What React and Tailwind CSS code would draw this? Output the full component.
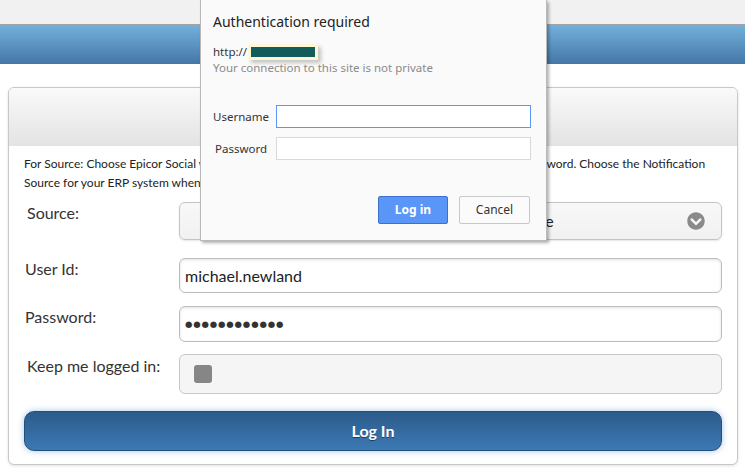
import { FaChevronCircleDown } from 'react-icons/fa'

const rows = [
  { label: 'User Id:', value: 'michael.newland' },
  { label: 'Password:', value: '●●●●●●●●●●●●', dots: true },
]

export default function App() {
  return (
    <div className="relative w-[745px] h-[471px] overflow-hidden bg-white font-['Lato',sans-serif]">
      {/* top chrome */}
      <div className="h-[25px] bg-[#f1f1f1] border-b border-[#a3a3a3]" />
      <div className="h-[39px] bg-linear-to-b from-[#73b1dc] to-[#4576a7]" />

      {/* login card */}
      <div className="mx-[8px] mt-[23px] w-[730px] rounded-[6px] border border-[#c8c8c8] bg-white shadow-[0_1px_3px_rgba(0,0,0,0.12)] overflow-hidden">
        <div className="h-[58px] bg-linear-to-b from-[#fafafa] to-[#e3e3e3]" />
        <div className="px-[15px] pt-[8px] pb-[13px]">
          <p className="text-[12px] leading-[19px] text-[#222] whitespace-nowrap">
            For Source: Choose Epicor Social when logging in with your Epicor Social profile user name and password. Choose the Notification
            <br />
            Source for your ERP system when logging in with your ERP user name and password.
          </p>

          <div className="mt-[10px] flex items-start">
            <div className="w-[155px] pl-[3px] pt-[1px] text-[16px] leading-[19px] text-[#333]">Source:</div>
            <div className="flex-1 h-[38px] rounded-[6px] border border-[#c4c4c4] bg-linear-to-b from-[#f8f8f8] to-[#f1f1f1] shadow-[0_1px_2px_rgba(0,0,0,0.1)] flex items-center pl-[2px] pr-[16px]">
              <span className="flex-1 text-center text-[16px] text-[#222]">Epicor ERP 10 Notification Source</span>
              <FaChevronCircleDown className="w-[18px] h-[18px] text-[#8a8a8a]" />
            </div>
          </div>

          {rows.map((r, i) => (
            <div key={i} className={`${i === 0 ? 'mt-[18px]' : 'mt-[13px]'} flex items-start`}>
              <div className="w-[155px] pl-[1px] pt-[1px] text-[16px] leading-[19px] text-[#333]">{r.label}</div>
              <div className={`flex-1 ${i === 0 ? 'h-[35px]' : 'h-[36px]'} rounded-[6px] border border-[#bdbdbd] bg-white shadow-[inset_0_1px_3px_rgba(0,0,0,0.12)] flex items-center px-[5px]`}>
                {r.dots ? (
                  <span className="text-[8.5px] tracking-[0.85px] text-[#333] font-['DejaVu_Sans',sans-serif]">{r.value}</span>
                ) : (
                  <span className="text-[16px] text-[#222]">{r.value}</span>
                )}
              </div>
            </div>
          ))}

          <div className="mt-[12px] flex items-start">
            <div className="w-[155px] pl-[3px] pt-[2px] text-[16px] leading-[19px] text-[#333]">Keep me logged in:</div>
            <div className="flex-1 h-[40px] rounded-[6px] border border-[#c6c6c6] bg-[#f5f5f5] flex items-center pl-[14px]">
              <span className="w-[18px] h-[18px] rounded-[3px] bg-[#868686]" />
            </div>
          </div>

          <button className="mt-[17px] w-full h-[40px] rounded-[10px] border border-[#244f7c] bg-linear-to-b from-[#2c5b8b] to-[#3c79b4] shadow-[0_0_6px_rgba(90,150,215,0.55)] text-white text-[16px] font-bold [text-shadow:0_1px_0_#1d3f63]">
            Log In
          </button>
        </div>
      </div>

      {/* browser auth dialog */}
      <div className="absolute left-[200px] top-0 w-[347px] h-[241px] bg-[#fafafa] border-x border-b border-[#b9b9b9] shadow-[2px_2px_3px_rgba(0,0,0,0.3)] pl-[12px] pr-[15px] font-['Noto_Sans',sans-serif]">
        <div className="pt-[12px] text-[14px] leading-[20px] text-[#222]">Authentication required</div>
        <div className="mt-[12px] text-[11.5px] leading-[16px] text-[#333] flex items-center">
          http://
          <span className="ml-[4px] inline-block w-[64px] h-[10px] bg-[#135c5c] shadow-[0_0_0_3px_#fdf7d8,3px_3px_4px_3px_rgba(0,0,0,0.22)]" />
        </div>
        <div className="text-[11.5px] leading-[16px] text-[#8a8a8a]">Your connection to this site is not private</div>

        <div className="mt-[29px] flex items-center">
          <div className="w-[54px] text-right text-[11.5px] text-[#333]">Username</div>
          <div className="ml-[9px] flex-1 h-[23px] bg-white border border-[#5b97f5]" />
        </div>
        <div className="mt-[9px] flex items-center">
          <div className="w-[54px] text-right text-[11.5px] text-[#333]">Password</div>
          <div className="ml-[9px] flex-1 h-[23px] bg-white border border-[#d9d9d9]" />
        </div>

        <div className="mt-[36px] flex justify-end gap-[11px] pr-[1px]">
          <button className="w-[70px] h-[28px] rounded-[2px] bg-[#5a96f7] border border-[#3d72cc] text-white text-[12px] font-bold">Log in</button>
          <button className="w-[71px] h-[28px] rounded-[2px] bg-[#fbfbfb] border border-[#c8c8c8] text-[#333] text-[12px]">Cancel</button>
        </div>
      </div>
    </div>
  )
}
